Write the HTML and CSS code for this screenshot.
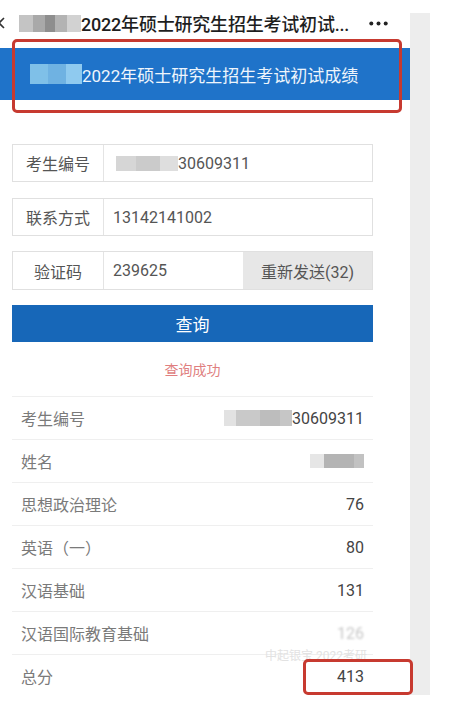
FILE: index.html
```html
<!DOCTYPE html>
<html lang="zh">
<head>
<meta charset="utf-8">
<title>2022年硕士研究生招生考试初试成绩</title>
<link rel="stylesheet" href="styles.css">
</head>
<body>
<div class="phone">
  <div class="page">
    <div class="titlebar">
      <svg class="back" width="6" height="14" viewBox="0 0 6 14"><path d="M5 2 L0 7 L5 12" fill="none" stroke="#333" stroke-width="1.6"/></svg>
      <span class="mosaic mosaic-title"></span>
      <span class="title-text">2022年硕士研究生招生考试初试...</span>
      <svg class="more" width="19" height="5" viewBox="0 0 19 5"><circle cx="2.3" cy="2.5" r="2" fill="#222"/><circle cx="9.5" cy="2.5" r="2" fill="#222"/><circle cx="16.7" cy="2.5" r="2" fill="#222"/></svg>
    </div>
    <div class="header">
      <span class="mosaic mosaic-header"></span>
      <span class="header-text">2022年硕士研究生招生考试初试成绩</span>
    </div>
    <div class="form">
      <div class="field">
        <div class="label">考生编号</div>
        <div class="value"><span class="mosaic mosaic-field"></span>30609311</div>
      </div>
      <div class="field">
        <div class="label">联系方式</div>
        <div class="value">13142141002</div>
      </div>
      <div class="field field-code">
        <div class="label">验证码</div>
        <div class="value">239625</div>
        <div class="resend">重新发送(32)</div>
      </div>
      <div class="query">查询</div>
      <div class="success">查询成功</div>
      <div class="results">
        <div class="row"><span class="r-label">考生编号</span><span class="r-value"><span class="mosaic mosaic-id"></span>30609311</span></div>
        <div class="row"><span class="r-label">姓名</span><span class="r-value"><span class="mosaic mosaic-name"></span></span></div>
        <div class="row"><span class="r-label">思想政治理论</span><span class="r-value">76</span></div>
        <div class="row"><span class="r-label">英语（一）</span><span class="r-value">80</span></div>
        <div class="row"><span class="r-label">汉语基础</span><span class="r-value">131</span></div>
        <div class="row"><span class="r-label">汉语国际教育基础</span><span class="r-value r-faded">126</span></div>
        <div class="row"><span class="r-label">总分</span><span class="r-value">413</span></div>
      </div>
    </div>
  </div>
  <div class="strip"></div>
  <div class="watermark">中起银宝 2022考研</div>
  <div class="mark mark-header"></div>
  <div class="mark mark-total"></div>
</div>
</body>
</html>
```

FILE: styles.css
```css
* { box-sizing: border-box; }
html, body { margin: 0; padding: 0; background: #ffffff; }
body {
  font-family: Roboto, "Noto Sans CJK SC", "Noto Sans", sans-serif;
  width: 462px;
  height: 708px;
  overflow: hidden;
}
.phone {
  position: relative;
  display: flex;
  align-items: flex-start;
  width: 430px;
}
.page {
  width: 410px;
  flex: none;
  background: #ffffff;
}
.strip {
  width: 20px;
  flex: none;
  margin-top: 13px;
  height: 682px;
  background: #ededed;
}
.titlebar {
  height: 46px;
  display: flex;
  align-items: center;
  color: #1e1e1e;
  font-size: 18px;
  font-weight: 500;
  white-space: nowrap;
}
.back { flex: none; margin-left: -1px; }
.mosaic { display: inline-block; flex: none; }
.mosaic-title {
  width: 62px;
  height: 17px;
  margin-left: 14px;
  background: linear-gradient(90deg, #c4c4c4 0 14px, #a9a9a9 14px 26px, #8e8e8e 26px 36px, #b3b3b3 36px 48px, #d2d2d2 48px 62px);
}
.title-text { margin-left: 0; letter-spacing: -0.2px; }
.more { flex: none; margin-left: auto; margin-right: 22px; }
.header {
  margin-top: 2px;
  height: 52px;
  background: #1f73c9;
  display: flex;
  align-items: center;
  padding-left: 30px;
  color: #eef5fc;
  font-size: 17px;
  white-space: nowrap;
}
.mosaic-header {
  width: 52px;
  height: 20px;
  background: linear-gradient(90deg, #7fc0e8 0 18px, #6fb2e2 18px 36px, #8fcaef 36px 52px);
}
.form {
  padding: 44px 37px 0 12px;
}
.field {
  display: flex;
  align-items: stretch;
  height: 38px;
  border: 1px solid #e0e0e0;
  margin-bottom: 16px;
  font-size: 16px;
  color: #555555;
}
.field + .field { margin-bottom: 15px; }
.field-code { height: 39px; }
.label {
  width: 91px;
  flex: none;
  display: flex;
  align-items: center;
  justify-content: center;
  border-right: 1px solid #e4e4e4;
}
.value {
  display: flex;
  align-items: center;
  padding-left: 9px;
}
.mosaic-field {
  width: 62px;
  height: 15px;
  margin-left: 3px;
  background: linear-gradient(90deg, #d6d6d6 0 20px, #cbcbcb 20px 44px, #dedede 44px 62px);
}
.resend {
  margin-left: auto;
  width: 129px;
  flex: none;
  display: flex;
  align-items: center;
  justify-content: center;
  background: #e7e7e7;
  color: #555555;
}
.query {
  height: 37px;
  background: #1767b8;
  color: #ffffff;
  font-size: 17px;
  display: flex;
  align-items: center;
  justify-content: center;
}
.success {
  height: 54px;
  display: flex;
  align-items: center;
  justify-content: center;
  color: #e07f7f;
  font-size: 14px;
}
.results { }
.row {
  height: 43px;
  border-top: 1px solid #efefef;
  display: flex;
  align-items: center;
  justify-content: space-between;
  padding: 0 9px;
  font-size: 16px;
}
.r-label { color: #7a7a7a; }
.r-value { color: #444444; display: flex; align-items: center; }
.r-faded { color: #c8c8c8; filter: blur(0.8px); }
.mosaic-id {
  width: 68px;
  height: 16px;
  background: linear-gradient(90deg, #e2e2e2 0 12px, #c9c9c9 12px 36px, #bdbdbd 36px 56px, #c6c6c6 56px 68px);
}
.mosaic-name {
  width: 54px;
  height: 14px;
  background: linear-gradient(90deg, #e6e6e6 0 14px, #b4b4b4 14px 44px, #c2c2c2 44px 54px);
}
.watermark {
  position: absolute;
  left: 265px;
  top: 646px;
  font-size: 12px;
  color: #e2e2e2;
  white-space: nowrap;
}
.mark {
  position: absolute;
  border: 3px solid #c73a30;
  border-radius: 5px;
}
.mark-header {
  left: 12px;
  top: 39px;
  width: 390px;
  height: 74px;
}
.mark-total {
  left: 303px;
  top: 659px;
  width: 110px;
  height: 36px;
}
```
